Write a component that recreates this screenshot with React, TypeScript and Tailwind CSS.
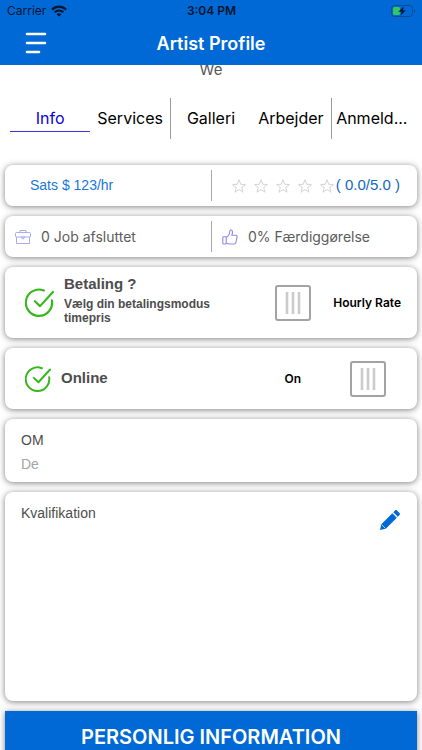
import React from "react";
import type { ReactNode } from "react";

const helvetica = "font-['Liberation_Sans',Arial,sans-serif]";

function Card({ className = "", children }: { className?: string; children: ReactNode }) {
  return (
    <section
      className={`flex shrink-0 rounded-lg bg-white shadow-[0_1px_6px_rgba(0,0,0,0.5)] ${className}`}
    >
      {children}
    </section>
  );
}

function StatusBar() {
  return (
    <div className="grid h-[22px] grid-cols-3 items-center pr-[6px] pl-[7px] text-[#04162f]">
      <div className="flex items-center gap-[5px] text-[12px]">
        <span>Carrier</span>
        <svg width="16" height="12" viewBox="0 0 16 12" fill="none" stroke="currentColor" strokeWidth="2.2" aria-hidden="true">
          <path d="M1 4.6C5 .7 11 .7 15 4.6" />
          <path d="M3.6 7.3c2.6-2.4 6.200-2.4 8.800 0" />
          <path d="M8 11.600 5.600 9.200c1.400-1.200 3.400-1.200 4.800 0z" fill="currentColor" stroke="none" />
        </svg>
      </div>
      <span className="text-center text-[12px] font-semibold">3:04 PM</span>
      <svg className="justify-self-end" width="25" height="12" viewBox="0 0 25 12" aria-hidden="true">
        <rect x=".5" y=".5" width="21" height="11" rx="3" fill="none" stroke="#0b4a91" />
        <rect x="2" y="2" width="7" height="8" rx="1.500" fill="#34c759" />
        <path d="M23 4v4c1.300-.5 1.300-3.500 0-4z" fill="#0b4a91" />
        <path d="M13 1 7.500 6.700h3L9.500 11 15 5.300h-3z" fill="#04101f" stroke="#0069d6" strokeWidth=".4" />
      </svg>
    </div>
  );
}

function Header() {
  return (
    <header className="shrink-0 bg-[#0069d6]">
      <StatusBar />
      <div className="grid h-[43px] grid-cols-[1fr_auto_1fr] items-center px-6">
        <button type="button" aria-label="Menu" className="justify-self-start text-white">
          <svg width="24" height="24" viewBox="0 0 24 24" stroke="currentColor" strokeWidth="2.600" strokeLinecap="round">
            <path d="M3 2h18M3 11h18M3 20h12" />
          </svg>
        </button>
        <h1 className="text-[18px] font-semibold text-white">Artist Profile</h1>
      </div>
    </header>
  );
}

const tabs = ["Info", "Services", "Galleri", "Arbejder", "Anmeldelser"];

function Tabs() {
  return (
    <div role="tablist" className="mx-[10px] grid h-[41px] shrink-0 grid-cols-5">
      {tabs.map((name, i) => (
        <button
          key={name}
          type="button"
          role="tab"
          aria-selected={i === 0}
          aria-label={name}
          className={`flex justify-center border-[#9a9a9a] text-[16px] ${
            i === 1 || i === 3 ? "border-r" : ""
          } ${i === 0 ? "text-[#0a00d8]" : "text-black"}`}
        >
          <span className={`h-[34px] w-full pt-2 leading-6 ${i === 0 ? "border-b border-[#3a32d8]" : ""}`}>
            {i === 4 ? "Anmeld..." : name}
          </span>
        </button>
      ))}
    </div>
  );
}

function Stars() {
  return (
    <div className="flex gap-[6px]" role="img" aria-label="0 / 5">
      {[0, 1, 2, 3, 4].map((n) => (
        <svg key={n} width="16" height="16" viewBox="0 0 16 16" fill="none" stroke="#d4d4d8" strokeWidth="1">
          <path d="m8 1.800 1.700 4.500 4.700.2-3.700 3 1.300 4.700L8 11.500l-4 2.700 1.300-4.700-3.700-3 4.700-.2z" />
        </svg>
      ))}
    </div>
  );
}

function Briefcase() {
  return (
    <svg width="16" height="16" viewBox="0 0 16 16" fill="none" stroke="#a9aaf0" strokeWidth="1" aria-hidden="true">
      <rect x=".5" y="3.500" width="15" height="4.500" rx="1" />
      <path d="M1.500 8v6.500h13V8M5 3.500v-2h6v2" />
      <path d="M6.500 8h3v.8L8 10.200 6.500 8.800z" />
    </svg>
  );
}

function ThumbUp() {
  return (
    <svg width="16" height="16" viewBox="0 0 16 16" fill="none" stroke="#8d88ee" strokeWidth="1.100" strokeLinejoin="round" aria-hidden="true">
      <rect x=".8" y="7.800" width="3.400" height="7.200" rx=".8" />
      <path d="M4.200 8.300C6.500 7 7.800 5 7.800 2.200c0-2 2.700-1.600 2.700.8 0 1.200-.3 2.200-.7 3.300h4c1 0 1.500.8 1.300 1.600l-1.200 5.600c-.2.900-.9 1.500-1.800 1.500H7c-1.200 0-1.600-.8-2.800-.8" />
    </svg>
  );
}

function CheckCircle({ size }: { size: number }) {
  return (
    <svg className="shrink-0" width={size} height={size} viewBox="0 0 28 28" fill="none" stroke="#35b81c" strokeWidth="2.100" strokeLinecap="round" strokeLinejoin="round" aria-hidden="true">
      <path d="M18.200 2.400A12.700 12.700 0 1 0 26 12" />
      <path d="m9.500 12.800 5 4.700L27 3.800" />
    </svg>
  );
}

function GripSwitch({ label }: { label: string }) {
  return (
    <button
      type="button"
      role="switch"
      aria-checked="true"
      aria-label={label}
      className="flex size-9 shrink-0 items-center justify-center rounded-[3px] border-2 border-[#a3a3a3] bg-white"
    >
      <svg width="16" height="22" viewBox="0 0 16 22" stroke="#cbcbcb" strokeWidth="2.600">
        <path d="M2 0v22M8 0v22M14 0v22" />
      </svg>
    </button>
  );
}

function Pencil() {
  return (
    <svg width="22" height="22" viewBox="0 0 22 22" fill="#0069d6" aria-hidden="true">
      <path d="M1 21l1.300-5.800L13.300 4.200l4.500 4.500L6.800 19.700z" />
      <path d="m14.300 3.200 1.700-1.700c.6-.6 1.400-.6 2 0l2.500 2.500c.6.6.6 1.400 0 2l-1.700 1.700z" />
      <path d="m2.600 15.600 3.800 3.800" stroke="#fff" strokeWidth=".7" />
    </svg>
  );
}

export default function App() {
  return (
    <div className="flex h-screen flex-col overflow-hidden bg-white font-[Inter,'Noto_Sans',sans-serif]">
      <Header />
      <div className="flex h-[33px] shrink-0 flex-col justify-start overflow-hidden">
        <p className="-mt-[6px] text-center text-[15px] leading-[22px] text-[#555]">We</p>
      </div>
      <Tabs />
      <main className="mt-[21px] flex flex-col gap-[10px] px-[5px] pt-[5px]">
        <Card className={`h-[41px] items-center text-[14px] ${helvetica}`}>
          <p className="w-1/2 pl-[25px] text-[#1877e0]">Sats $ 123/hr</p>
          <div className="flex h-[31px] w-1/2 items-center justify-between border-l border-[#a8a8a8] pr-[17px] pl-[19px]">
            <Stars />
            <span className="whitespace-nowrap text-[15px] text-[#1268c0]">( 0.0/5.0 )</span>
          </div>
        </Card>

        <Card className="h-[41px] items-center text-[14px] text-[#5c5c5c]">
          <div className="flex w-1/2 items-center gap-[10px] pl-[10px]">
            <Briefcase />
            <span>0 Job afsluttet</span>
          </div>
          <div className="flex h-[31px] w-1/2 items-center gap-[10px] border-l border-[#a8a8a8] pl-[10px]">
            <ThumbUp />
            <span>0% Færdiggørelse</span>
          </div>
        </Card>

        <Card className={`h-[71px] items-center pr-4 pl-5 ${helvetica}`}>
          <CheckCircle size={29} />
          <div className="ml-[10px] flex-1 pb-[6px] font-bold text-[#4d4d4d]">
            <h2 className="text-[15px] leading-5">Betaling ?</h2>
            <p className="mt-[3px] w-[160px] text-[12px] leading-[14px]">Vælg din betalingsmodus timepris</p>
          </div>
          <GripSwitch label="Hourly Rate" />
          <span className="ml-[22px] font-[Inter,sans-serif] text-[12px] font-semibold text-black">Hourly Rate</span>
        </Card>

        <Card className={`h-[61px] items-center pr-[31px] pl-5 ${helvetica}`}>
          <CheckCircle size={26} />
          <h2 className="ml-[10px] flex-1 text-[15px] font-bold text-[#4d4d4d]">Online</h2>
          <span className="mr-[49px] font-[Inter,sans-serif] text-[12px] font-semibold text-black">On</span>
          <GripSwitch label="Online" />
        </Card>

        <Card className={`h-[63px] flex-col px-4 pt-3 text-[14px] ${helvetica}`}>
          <h2 className="leading-[18px] text-[#4d4d4d]">OM</h2>
          <p className="mt-[6px] leading-[18px] text-[#a5a5a5]">De</p>
        </Card>

        <Card className={`h-[209px] items-start justify-between px-4 pt-3 text-[14px] ${helvetica}`}>
          <h2 className="leading-[18px] text-[#4d4d4d]">Kvalifikation</h2>
          <button type="button" aria-label="Rediger kvalifikation" className="mt-[5px]">
            <Pencil />
          </button>
        </Card>

        <button
          type="button"
          className="h-[52px] shrink-0 bg-[#0069d6] text-[20px] font-semibold text-white shadow-[0_1px_6px_rgba(0,0,0,0.5)]"
        >
          PERSONLIG INFORMATION
        </button>
      </main>
    </div>
  );
}
